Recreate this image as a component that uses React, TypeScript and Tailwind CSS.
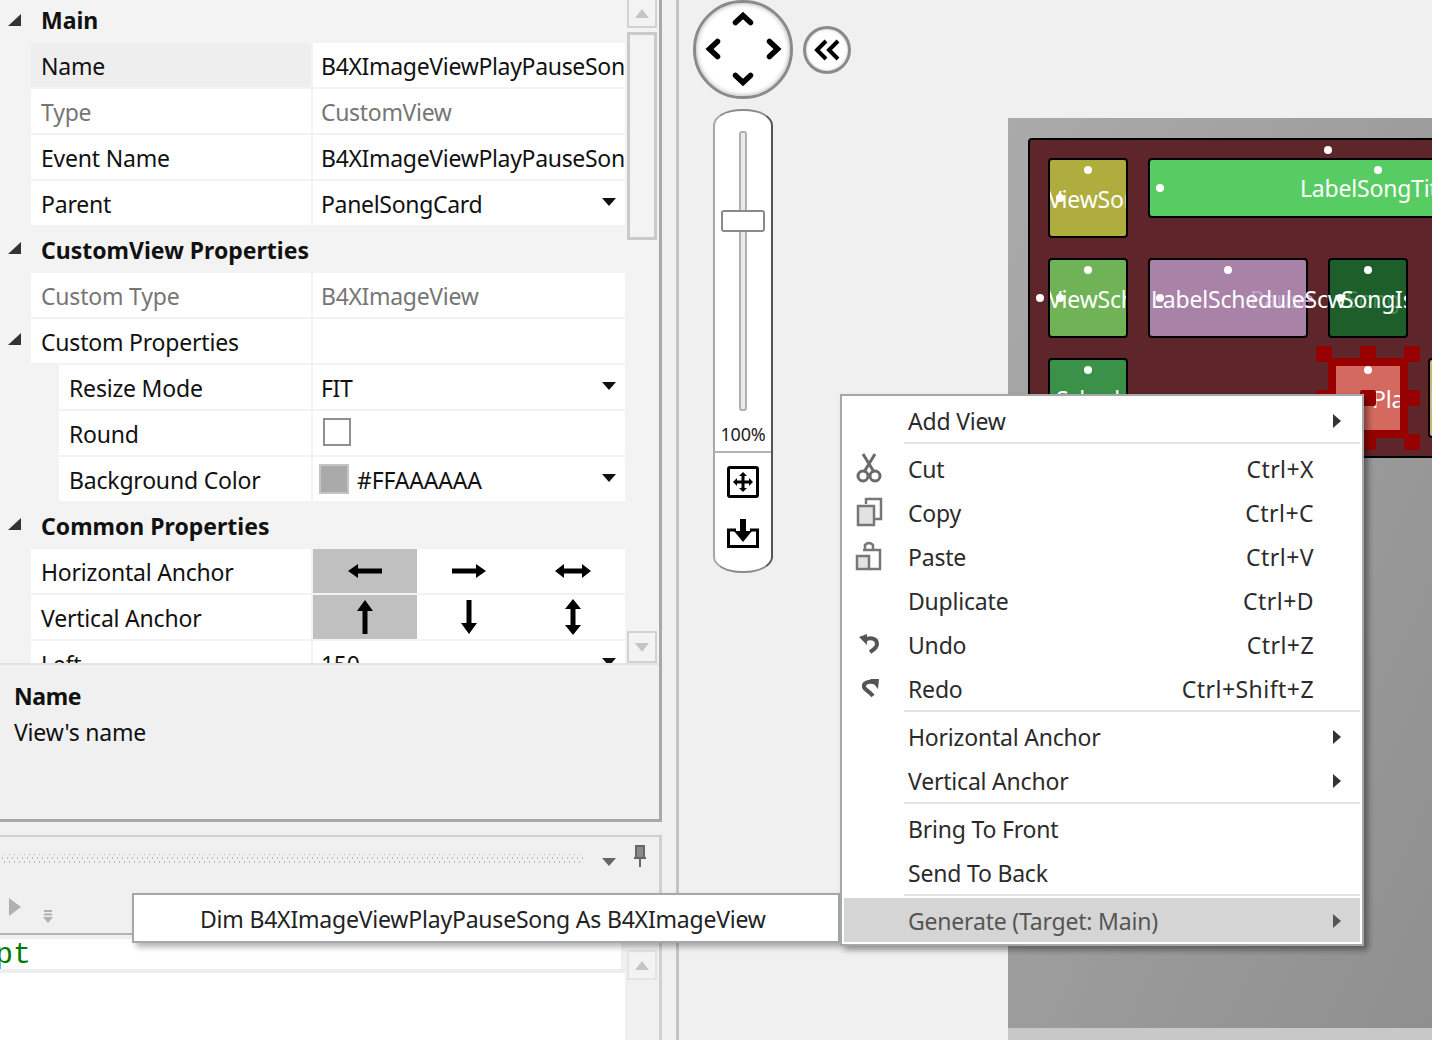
const font = "font-['Noto_Sans',sans-serif]";

function Tri({ className = "" }: { className?: string }) {
  return (
    <svg width="13" height="12" viewBox="0 0 13 12" className={className}>
      <polygon points="13,0 13,12 0,12" fill="#333" />
    </svg>
  );
}

function Drop({ dark = "#111" }: { dark?: string }) {
  return (
    <svg width="14" height="8" viewBox="0 0 14 8">
      <polygon points="0,0 14,0 7,8" fill={dark} />
    </svg>
  );
}

function Header({ label, h, first }: { label: string; h: string; first?: boolean }) {
  return (
    <div className={`flex items-center ${h}`}>
      <div className="w-[41px] pl-[8px] -mt-[4px] shrink-0"><Tri /></div>
      <span className={`font-bold tracking-normal text-[#111] ${first ? "-mt-[2px]" : ""}`}>{label}</span>
    </div>
  );
}

function Row({
  label, value, gray, indent, selected, drop, children, tri,
}: {
  label: string; value?: string; gray?: boolean; indent?: boolean; selected?: boolean; drop?: boolean; children?: React.ReactNode; tri?: boolean;
}) {
  const col = gray ? "text-[#767676]" : "text-[#111]";
  return (
    <div className="relative flex h-[44px] mb-[2px] ml-[31px] w-[594px] gap-[2px]">
      {tri && <div className="absolute -left-[23px] top-[14px]"><Tri /></div>}
      <div className={`flex items-center justify-start h-full pt-[3px] ${indent ? "ml-[28px] w-[252px]" : "w-[280px]"} pl-[10px] ${selected ? "bg-[#eeeeee]" : "bg-white"} ${col}`}>
        {label}
      </div>
      <div className={`flex-1 flex items-center h-full bg-white pl-[8px] pr-[9px] overflow-hidden whitespace-nowrap ${col}`}>
        {children ?? <span className="flex-1 pt-[3px] tracking-[-0.32px]">{value}</span>}
        {drop && <span className="-mt-[2px] shrink-0"><Drop /></span>}
      </div>
    </div>
  );
}

function Arrow({ d }: { d: "l" | "r" | "h" | "u" | "d" | "v" }) {
  if (d === "l") return <svg width="34" height="14" viewBox="0 0 34 14"><path d="M0 7L10 0V4.5H34V9.5H10V14Z" fill="#000"/></svg>;
  if (d === "r") return <svg width="34" height="14" viewBox="0 0 34 14"><path d="M34 7L24 0V4.5H0V9.5H24V14Z" fill="#000"/></svg>;
  if (d === "h") return <svg width="36" height="14" viewBox="0 0 36 14"><path d="M0 7L9 0V4.5H27V0L36 7L27 14V9.5H9V14Z" fill="#000"/></svg>;
  if (d === "u") return <svg width="16" height="34" viewBox="0 0 16 34"><path d="M8 0L16 11H10.5V34H5.5V11H0Z" fill="#000"/></svg>;
  if (d === "d") return <svg width="16" height="34" viewBox="0 0 16 34"><path d="M8 34L16 23H10.5V0H5.5V23H0Z" fill="#000"/></svg>;
  return <svg width="16" height="36" viewBox="0 0 16 36"><path d="M8 0L16 10H10.5V26H16L8 36L0 26H5.5V10H0Z" fill="#000"/></svg>;
}

function AnchorRow({ label, items }: { label: string; items: ("l" | "r" | "h" | "u" | "d" | "v")[] }) {
  return (
    <Row label={label}>
      <div className="-ml-[8px] -mr-[9px] flex h-full w-[312px]">
        {items.map((d, i) => (
          <div key={d} className={`flex h-full w-[104px] items-center justify-center ${i === 0 ? "bg-[#c0c0c0]" : ""}`}>
            <Arrow d={d} />
          </div>
        ))}
      </div>
    </Row>
  );
}

function ScrollBtn({ up, className = "" }: { up?: boolean; className?: string }) {
  return (
    <div className={`flex w-[30px] h-[30px] items-center justify-center border-2 border-[#d0d3d4] bg-[#f3f3f3] ${className}`}>
      <svg width="14" height="9" viewBox="0 0 14 9">
        <polygon points={up ? "0,9 14,9 7,0" : "0,0 14,0 7,9"} fill="#c4c4c4" />
      </svg>
    </div>
  );
}

function CutIcon() {
  return (
    <svg width="28" height="30" viewBox="0 0 28 30" fill="none" stroke="#6a6a6a" strokeWidth="3">
      <circle cx="8" cy="23" r="5" />
      <circle cx="20" cy="23" r="5" />
      <path d="M8 1L19 19M20 1L9 19" />
    </svg>
  );
}
function CopyIcon() {
  return (
    <svg width="28" height="30" viewBox="0 0 28 30" fill="none">
      <path d="M11 7V2H26V22H20" stroke="#777" strokeWidth="2.5" />
      <rect x="3" y="9" width="16" height="19" fill="#e2e2e2" stroke="#777" strokeWidth="2.5" />
    </svg>
  );
}
function PasteIcon() {
  return (
    <svg width="28" height="30" viewBox="0 0 28 30" fill="none" stroke="#777" strokeWidth="2.5">
      <path d="M10 8V4Q14 0 18 4V8" />
      <path d="M8 9H25V28H14" />
      <rect x="2" y="15" width="12" height="13" fill="#e2e2e2" />
    </svg>
  );
}
function UndoIcon() {
  return (
    <svg width="22" height="20" viewBox="0 0 22 20" fill="none">
      <path d="M7 6C12 3 19 4 19 10C19 14 15 16 12 18" stroke="#555" strokeWidth="4" />
      <polygon points="1,3 9,0 9,11" fill="#555" />
    </svg>
  );
}
function RedoIcon() {
  return (
    <svg width="22" height="20" viewBox="0 0 22 20" fill="none" className="ml-[3px]">
      <path d="M16 5C9 2 3 5 4 9C5 12 10 14 13 18" stroke="#555" strokeWidth="4" />
      <polygon points="19,1 10,1 18,11" fill="#555" />
    </svg>
  );
}

function MenuArrow({ color = "#333" }: { color?: string }) {
  return (
    <svg width="8" height="14" viewBox="0 0 8 14"><polygon points="0,0 8,7 0,14" fill={color} /></svg>
  );
}

function MenuItem({ label, shortcut, icon, sub, active }: { label: string; shortcut?: string; icon?: React.ReactNode; sub?: boolean; active?: boolean }) {
  return (
    <div className={`flex h-[44px] items-center ${active ? "bg-[#d5d5d5] text-[#555]" : "text-[#2b2b2b]"}`}>
      <div className="flex w-[64px] shrink-0 items-center justify-center pr-[14px]">{icon}</div>
      <span className="flex-1 pt-[2px]">{label}</span>
      {shortcut && <span className="mr-[46px] pt-[2px] tracking-[0.45px]">{shortcut}</span>}
      {sub && <span className="mr-[19px] flex pt-[2px]"><MenuArrow color={active ? "#555" : "#333"} /></span>}
    </div>
  );
}

function MenuSep() {
  return <div className="ml-[60px] mb-[2px] h-[2px] bg-[#e3e3e3]" />;
}

function Dot({ x, y }: { x: number; y: number }) {
  return <div className="absolute h-[8px] w-[8px] rounded-full bg-white" style={{ left: x - 4, top: y - 4 }} />;
}

function Node({ x, y, w, h, bg, children, clip = true }: { x: number; y: number; w: number; h: number; bg: string; children?: React.ReactNode; clip?: boolean }) {
  return (
    <div
      className={`absolute rounded-[4px] border-2 border-black text-white ${clip ? "overflow-hidden" : ""}`}
      style={{ left: x, top: y, width: w, height: h, background: bg }}
    >
      {children}
    </div>
  );
}

function Handle({ x, y }: { x: number; y: number }) {
  return <div className="absolute h-[16px] w-[16px] rounded-[2px] bg-[#990000]" style={{ left: x, top: y }} />;
}

function Canvas() {
  return (
    <div className="absolute left-[1008px] top-[118px] h-[922px] w-[424px] overflow-hidden bg-[#c8c8c8]">
      <div className="h-[910px] w-full bg-gradient-to-br from-[#aaaaaa] to-[#8f8f8f]" />
      <div className="absolute left-[20px] top-[20px] h-[320px] w-[500px] rounded-[4px] border-2 border-black bg-[#5e252b]" />
      <div className="absolute inset-0 -translate-x-[1008px] -translate-y-[118px]">
        <Node x={1048} y={158} w={80} h={80} bg="#aead3d">
          <div className="absolute left-[-2px] top-[28px] whitespace-nowrap">ViewSong</div>
        </Node>
        <Node x={1148} y={158} w={460} h={60} bg="#57cc63">
          <div className="absolute left-[150px] top-[17px] whitespace-nowrap">LabelSongTitle</div>
        </Node>
        <Node x={1048} y={258} w={80} h={80} bg="#6fb356">
          <div className="absolute left-[-2px] top-[28px] whitespace-nowrap">ViewSchedule</div>
        </Node>
        <Node x={1328} y={258} w={80} h={80} bg="#1e5e2a">
          <div className="absolute left-[16px] top-[28px] whitespace-nowrap text-[#3f8a50]">Song</div>
          <div className="absolute left-[11px] top-[28px] whitespace-nowrap">SongIs</div>
        </Node>
        <Node x={1148} y={258} w={160} h={80} bg="#a982a7" clip={false}>
          <div className="absolute left-[100px] top-[28px] whitespace-nowrap text-[#c4a2cf]">Pause</div>
          <div className="absolute left-[1px] top-[28px] z-10 whitespace-nowrap">LabelScheduleScw</div>
        </Node>
        <Node x={1048} y={358} w={80} h={120} bg="#3c9148">
          <div className="absolute left-[6px] top-[28px] whitespace-nowrap">Schedule</div>
        </Node>
        <Node x={1428} y={358} w={80} h={80} bg="#c9b47a">
          <div className="absolute left-0 top-[28px] whitespace-nowrap">Label</div>
        </Node>
        <div className="absolute left-[1328px] top-[358px] h-[80px] w-[80px] overflow-hidden border-[8px] border-[#990000] bg-[#d4695f] text-white">
          <div className="absolute left-[36px] top-[22px] whitespace-nowrap">Play</div>
        </div>
        <Handle x={1316} y={346} />
        <Handle x={1360} y={346} />
        <Handle x={1404} y={346} />
        <Handle x={1316} y={390} />
        <Handle x={1360} y={390} />
        <Handle x={1404} y={390} />
        <Handle x={1316} y={434} />
        <Handle x={1360} y={434} />
        <Handle x={1404} y={434} />
        <Dot x={1328} y={150} />
        <Dot x={1378} y={170} />
        <Dot x={1160} y={188} />
        <Dot x={1088} y={170} />
        <Dot x={1060} y={198} />
        <Dot x={1088} y={270} />
        <Dot x={1060} y={298} />
        <Dot x={1040} y={298} />
        <Dot x={1228} y={270} />
        <Dot x={1160} y={298} />
        <Dot x={1368} y={270} />
        <Dot x={1340} y={298} />
        <Dot x={1088} y={370} />
        <Dot x={1368} y={370} />
      </div>
    </div>
  );
}

export default function App() {
  return (
    <div className={`relative flex h-[1040px] w-[1432px] overflow-hidden bg-[#f0f0f0] text-[23px] leading-none tracking-[-0.2px] ${font}`}>
      {/* left column */}
      <div className="flex h-full w-[679px] shrink-0 flex-col border-r-[3px] border-[#c4c4c4]">
        <div className="flex h-[822px] w-[662px] shrink-0 flex-col border-r-[3px] border-b-[3px] border-[#a8a8a8]">
          <div className="flex h-[663px] shrink-0 overflow-hidden bg-[#f3f3f3]">
            <div className="w-[627px] shrink-0">
              <Header label="Main" h="h-[43px]" first />
              <Row label="Name" value="B4XImageViewPlayPauseSong" selected />
              <Row label="Type" value="CustomView" gray />
              <Row label="Event Name" value="B4XImageViewPlayPauseSong" />
              <Row label="Parent" value="PanelSongCard" drop />
              <Header label="CustomView Properties" h="h-[46px]" />
              <Row label="Custom Type" value="B4XImageView" gray />
              <Row label="Custom Properties" tri />
              <Row label="Resize Mode" value="FIT" indent drop />
              <Row label="Round" indent>
                <div className="-mt-[2px] ml-[2px] h-[28px] w-[28px] border-2 border-[#8f8f8f] bg-white" />
              </Row>
              <Row label="Background Color" indent drop>
                <div className="flex flex-1 items-center">
                  <div className="-ml-[2px] h-[30px] w-[30px] border-2 border-[#c4c4c4] bg-[#aaaaaa]" />
                  <span className="ml-[8px] pt-[3px]">#FFAAAAAA</span>
                </div>
              </Row>
              <Header label="Common Properties" h="h-[46px]" />
              <AnchorRow label="Horizontal Anchor" items={["l", "r", "h"]} />
              <AnchorRow label="Vertical Anchor" items={["u", "d", "v"]} />
              <Row label="Left" value="150" drop />
            </div>
            <div className="flex w-[30px] shrink-0 flex-col">
              <ScrollBtn up className="-mt-[2px]" />
              <div className="mt-[4px] h-[208px] border-[3px] border-[#c8cbcc] bg-[#f3f3f3]" />
              <div className="flex-1" />
              <ScrollBtn className="h-[32px]" />
            </div>
          </div>
          <div className="flex-1 border-t-2 border-[#e3e3e3] bg-[#f0f0f0] pl-[14px] pt-[20px] text-[#111]">
            <div className="font-bold tracking-[-0.4px]">Name</div>
            <div className="mt-[13px]">View's name</div>
          </div>
        </div>
        <div className="mt-[13px] flex min-h-0 w-[662px] flex-1 flex-col border-t-2 border-r-[3px] border-[#d0d0d0]">
          <div className="flex h-[43px] shrink-0 items-center">
            <div className="h-[10px] w-[584px] bg-[radial-gradient(#b8b8b8_0.8px,transparent_0.8px),radial-gradient(#b8b8b8_0.8px,transparent_0.8px)] bg-[length:5px_8px] bg-[position:0_0,2px_4px]" />
            <span className="ml-[18px] mt-[6px] flex"><Drop dark="#666" /></span>
            <svg width="14" height="22" viewBox="0 0 14 22" className="ml-[17px] -mt-[6px]">
              <path d="M3 1H11V13H3Z" fill="#888" stroke="#666" strokeWidth="2" />
              <path d="M1 13H13M7 13V22" fill="none" stroke="#666" strokeWidth="2" />
            </svg>
          </div>
          <div className="relative flex h-[55px] shrink-0 items-start border-b-2 border-[#b4b4b4]">
            <svg width="12" height="18" viewBox="0 0 12 18" className="ml-[9px] mt-[18px]"><polygon points="0,0 12,9 0,18" fill="#b0b0b0" /></svg>
            <svg width="10" height="13" viewBox="0 0 10 13" className="ml-[22px] mt-[30px]">
              <path d="M1 1H9M1 4.5H9" stroke="#b0b0b0" strokeWidth="2" />
              <polygon points="0,7 10,7 5,13" fill="#b0b0b0" />
            </svg>
          </div>
          <div className="flex min-h-0 flex-1 pt-[4px]">
            <div className="flex w-[625px] shrink-0 flex-col">
              <div className="h-[30px] w-[621px] shrink-0 overflow-hidden bg-white font-['Liberation_Mono',monospace] text-[30px] leading-[32px] tracking-normal text-[#007a00]"><span className="-ml-[5px] block">pt</span></div>
              <div className="h-[4px] shrink-0 bg-[#ededed]" />
              <div className="flex-1 bg-white" />
            </div>
            <div className="ml-[2px] flex w-[30px] flex-col">
              <ScrollBtn up className="mt-[11px] border-[#e4e4e4]" />
            </div>
          </div>
        </div>
      </div>

      {/* right column controls */}
      <div className="flex flex-1 flex-col">
        <div className="ml-[14px] flex items-start">
          <div className="relative h-[99px] w-[100px] rounded-full border-[3px] border-[#8a8a8a] bg-white shadow-[inset_0_0_5px_rgba(0,0,0,0.35)]">
            <svg width="94" height="93" viewBox="0 0 94 93" fill="none" stroke="#000" strokeWidth="5.5" strokeLinecap="round" strokeLinejoin="miter">
              <path d="M39.5 19.5L47 12.5L54.5 19.5" />
              <path d="M39.5 72.5L47 79.5L54.5 72.5" />
              <path d="M21.5 38.5L13.5 46L21.5 53.5" />
              <path d="M73.5 38.5L81.5 46L73.5 53.5" />
            </svg>
          </div>
          <div className="ml-[10px] mt-[26px] flex h-[48px] w-[48px] items-center justify-center rounded-full border-[3px] border-[#8a8a8a] bg-white shadow-[inset_0_0_3px_rgba(0,0,0,0.25)]">
            <svg width="26" height="22" viewBox="0 0 26 22" fill="none" stroke="#000" strokeWidth="4" strokeLinejoin="miter">
              <path d="M12 2L3 11L12 20" />
              <path d="M24 2L15 11L24 20" />
            </svg>
          </div>
        </div>
        <div className="relative ml-[34px] mt-[10px] flex h-[464px] w-[60px] flex-col items-center rounded-[29px/16px] border-x-2 border-l-[#a8a8a8] border-r-[#555] border-y-2 border-y-[#8a8a8a] bg-white">
          <div className="relative mt-[20px] flex h-[280px] w-full shrink-0 justify-center">
            <div className="h-full w-[8px] rounded-[3px] border-2 border-[#b0b0b0] bg-[#e8ecea]" />
            <div className="absolute left-[6px] top-[79px] h-[22px] w-[44px] rounded-[3px] border-2 border-[#8a8a8a] bg-white" />
          </div>
          <div className="mt-[10px] h-[30px] shrink-0 text-[18px] leading-[26px] text-[#222]">100%</div>
          <div className="h-[2px] w-full shrink-0 bg-[#b4b4b4]" />
          <svg width="32" height="32" viewBox="0 0 32 32" className="mt-[13px]" fill="none">
            <rect x="1.5" y="1.5" width="29" height="29" rx="1.5" stroke="#000" strokeWidth="3" />
            <path d="M16 6L20 10H17.5V14.5H22V12L26 16L22 20V17.5H17.5V22H20L16 26L12 22H14.5V17.5H10V20L6 16L10 12V14.5H14.5V10H12Z" fill="#000" />
          </svg>
          <svg width="32" height="29" viewBox="0 0 32 29" className="mt-[21px]" fill="none">
            <path d="M9 11H1.5V27.5H30.5V11H23" stroke="#000" strokeWidth="3" />
            <path d="M13 0H19V12H25L16 23L7 12H13Z" fill="#000" />
          </svg>
        </div>
      </div>

      <Canvas />

      {/* tooltip */}
      <div className="absolute left-[132px] top-[893px] flex h-[50px] w-[708px] items-center border-2 border-[#a4a8ab] bg-white pl-[66px] pt-[2px] text-[#222] shadow-[4px_4px_6px_rgba(0,0,0,0.3)]">
        Dim B4XImageViewPlayPauseSong As B4XImageView
      </div>

      {/* context menu */}
      <div className="absolute left-[840px] top-[394px] w-[524px] border-2 border-[#a4a8ab] bg-white p-[2px] shadow-[4px_4px_6px_rgba(0,0,0,0.4)]">
        <MenuItem label="Add View" sub />
        <MenuSep />
        <MenuItem label="Cut" shortcut="Ctrl+X" icon={<CutIcon />} />
        <MenuItem label="Copy" shortcut="Ctrl+C" icon={<CopyIcon />} />
        <MenuItem label="Paste" shortcut="Ctrl+V" icon={<PasteIcon />} />
        <MenuItem label="Duplicate" shortcut="Ctrl+D" />
        <MenuItem label="Undo" shortcut="Ctrl+Z" icon={<UndoIcon />} />
        <MenuItem label="Redo" shortcut="Ctrl+Shift+Z" icon={<RedoIcon />} />
        <MenuSep />
        <MenuItem label="Horizontal Anchor" sub />
        <MenuItem label="Vertical Anchor" sub />
        <MenuSep />
        <MenuItem label="Bring To Front" />
        <MenuItem label="Send To Back" />
        <MenuSep />
        <MenuItem label="Generate (Target: Main)" sub active />
      </div>
    </div>
  );
}
